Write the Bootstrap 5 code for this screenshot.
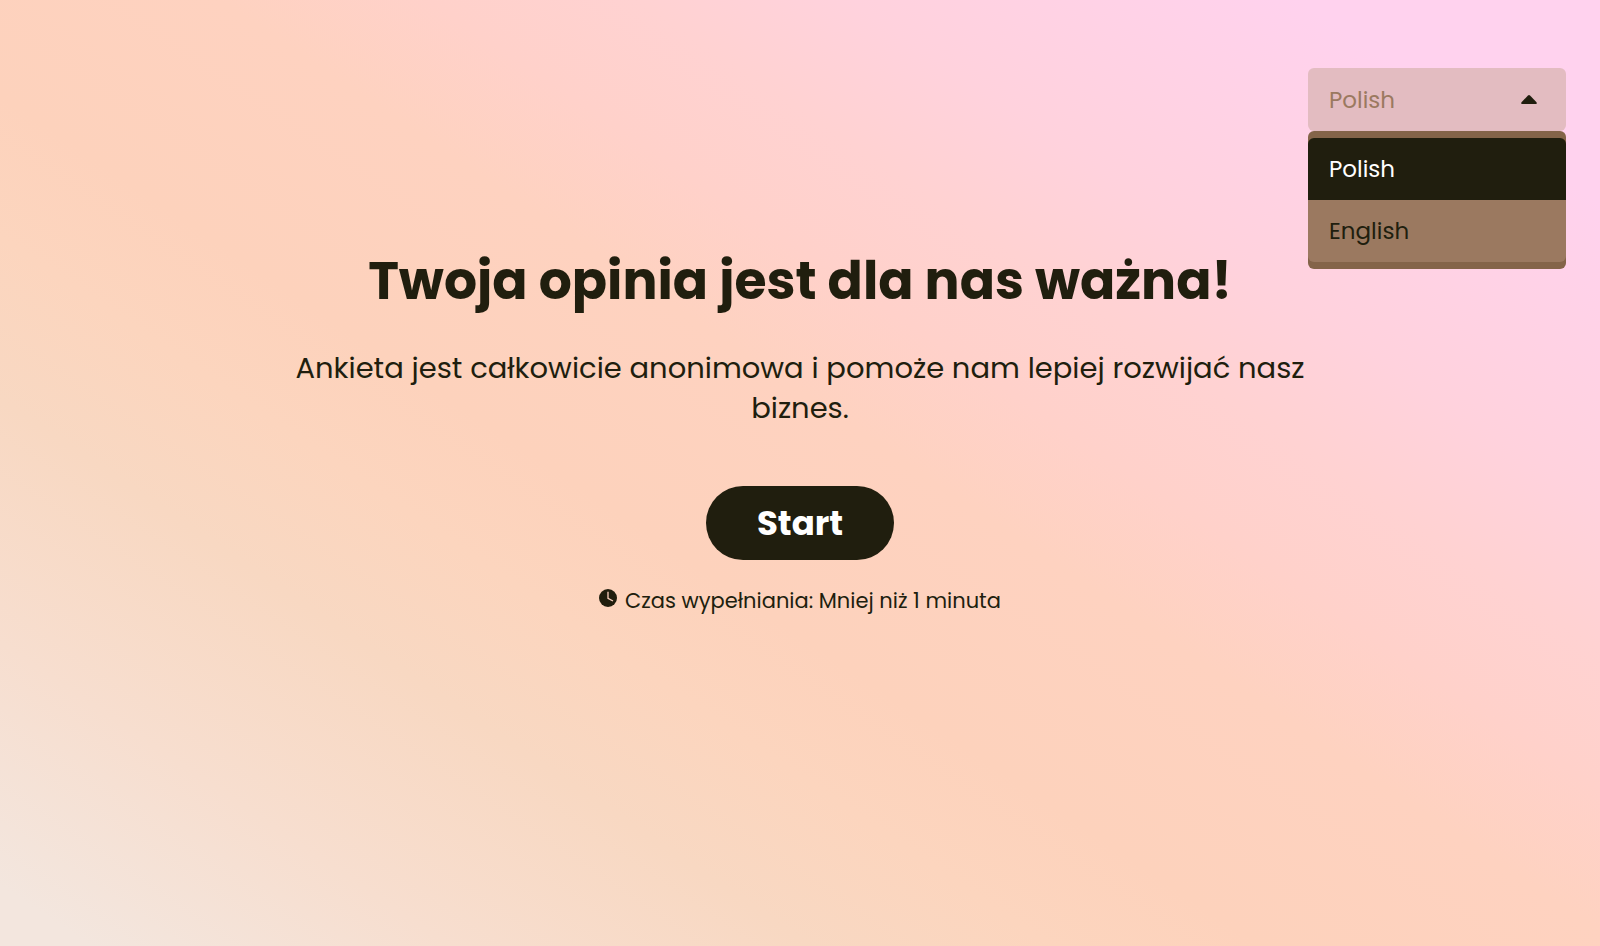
<!DOCTYPE html>
<html lang="pl">
<head>
<meta charset="utf-8">
<meta name="viewport" content="width=device-width, initial-scale=1">
<title>Ankieta</title>
<link href="https://cdn.jsdelivr.net/npm/bootstrap@5.3.0/dist/css/bootstrap.min.css" rel="stylesheet">
<style>
  :root { --ink: #201e0e; --tan: #9b7960; --tan-dark: #846449; }
  body {
    font-family: Poppins, Inter, "Noto Sans", sans-serif;
    color: var(--ink);
    background: linear-gradient(34deg, #f3e6de 3%, #f7decf 15%, #f8d8c2 27%, #fcd5be 35%, #fdd2bc 42%, #fed2c0 54%, #ffd1ca 61%, #ffd2d2 68%, #ffd2dd 75%, #ffd2ee 90%) no-repeat;
  }
  .survey { padding-top: 249px; }
  .survey-body { max-width: 1056px; }
  .survey-title { font-size: 52px; line-height: 64px; margin-bottom: 35px; }
  .survey-text { font-size: 29px; line-height: 40px; margin-bottom: 58px; }
  .btn-start {
    --bs-btn-color: #fff; --bs-btn-bg: var(--ink);
    --bs-btn-hover-color: #fff; --bs-btn-hover-bg: #38351d;
    font-size: 34px; line-height: 42px; padding: 16px 51px; border: 0;
  }
  .survey-time { font-size: 21px; line-height: 32px; margin-top: 25px; }
  .language { top: 68px; right: 34px; width: 258px; font-size: 23px; line-height: 34px; }
  .language-select {
    appearance: none; color: var(--tan); background: #e3bcc1;
    border: 0; border-radius: 6px; padding: 0 21px; height: 63px; line-height: 36px;
  }
  .language-caret { right: 29px; top: 27px; pointer-events: none; }
  .language-menu { background: var(--tan-dark); border-radius: 6px; padding: 7px 0; }
  .language-option {
    color: var(--ink); background: var(--tan); border: 0; padding: 14px 21px;
  }
  .language-option:first-child { border-radius: 6px 6px 0 0; }
  .language-option:last-child { border-radius: 0 0 6px 6px; }
  .language-option.active { color: #fff; background: var(--ink); }
</style>
</head>
<body class="min-vh-100">
<div class="language position-absolute">
  <div class="position-relative">
    <select id="language" class="language-select d-block w-100" aria-label="Język">
      <option selected>Polish</option>
      <option>English</option>
    </select>
    <svg class="language-caret position-absolute" width="16" height="9" viewBox="0 0 17 9" preserveAspectRatio="none" aria-hidden="true"><path d="M7.4.6Q8.5-.4 9.6.6L16.5 7.2Q17.3 9 15.5 9H1.5Q-.3 9 .5 7.2Z" fill="#201e0e"/></svg>
  </div>
  <div class="language-menu">
    <button type="button" class="language-option active d-block w-100 text-start">Polish</button>
    <button type="button" class="language-option d-block w-100 text-start">English</button>
  </div>
</div>
<main class="survey container-fluid">
  <div class="survey-body mx-auto text-center">
    <h1 class="survey-title fw-bold">Twoja opinia jest dla nas ważna!</h1>
    <p class="survey-text">Ankieta jest całkowicie anonimowa i pomoże nam lepiej rozwijać nasz biznes.</p>
    <button type="button" class="btn btn-start rounded-pill fw-bold">Start</button>
    <p class="survey-time d-flex justify-content-center gap-2 mb-0">
      <svg width="18" height="18" viewBox="0 0 18 18" class="mt-1" aria-hidden="true"><circle cx="9" cy="9" r="9" fill="#201e0e"/><path d="M9 2.7V9.3L14 12" fill="none" stroke="#fdd2c0" stroke-width="1.3"/></svg>
      <span>Czas wypełniania: Mniej niż 1 minuta</span>
    </p>
  </div>
</main>
<script src="https://cdn.jsdelivr.net/npm/bootstrap@5.3.0/dist/js/bootstrap.bundle.min.js"></script>
</body>
</html>
